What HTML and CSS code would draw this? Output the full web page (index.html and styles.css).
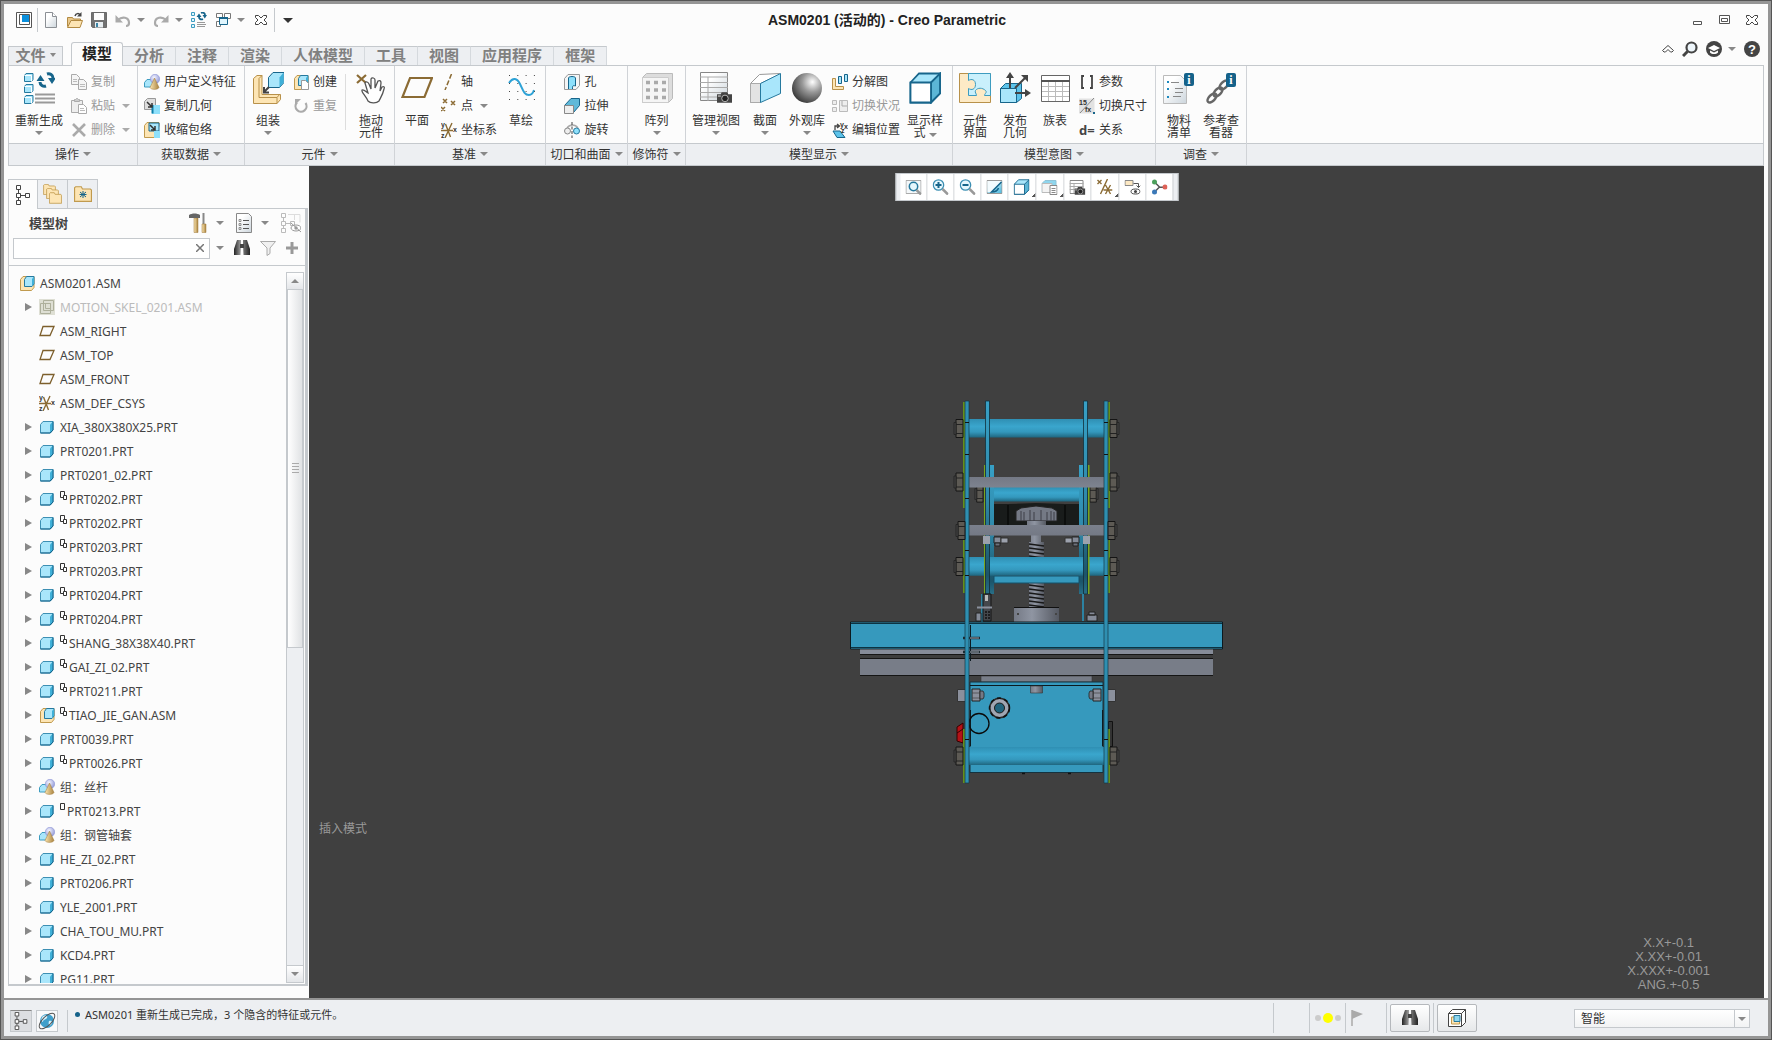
FILE: index.html
```html
<!DOCTYPE html>
<html lang="zh-CN">
  <head>
    <meta charset="UTF-8" />
    <meta name="viewport" content="width=device-width, initial-scale=1.0" />
    <title>ASM0201 (活动的) - Creo Parametric</title>
    <link rel="stylesheet" href="styles.css">
  </head>

  <body>
    <!-- icon sprite -->
    <svg class="sprite" width="0" height="0" aria-hidden="true">
      <defs>
        <linearGradient id="g-page" x1="0" y1="0" x2="1" y2="1"><stop offset="0.3" stop-color="#fff"/><stop offset="1" stop-color="#ccd5dc"/></linearGradient>
        <linearGradient id="g-dark" x1="0" x2="1"><stop offset="0" stop-color="#222"/><stop offset="0.4" stop-color="#999"/><stop offset="1" stop-color="#222"/></linearGradient>
        <linearGradient id="g-cone" x1="0" x2="1"><stop offset="0" stop-color="#fbe5b0"/><stop offset="1" stop-color="#a98340"/></linearGradient>
        <radialGradient id="g-ball" cx="0.68" cy="0.3" r="0.75"><stop offset="0" stop-color="#fff"/><stop offset="0.45" stop-color="#999"/><stop offset="1" stop-color="#3c3c3c"/></radialGradient>
        <radialGradient id="g-sph" cx="0.4" cy="0.35" r="0.7"><stop offset="0" stop-color="#f4f4ff"/><stop offset="1" stop-color="#8d96d6"/></radialGradient>
        <linearGradient id="g-blue" x1="0" y1="0" x2="1" y2="1"><stop offset="0" stop-color="#fff"/><stop offset="1" stop-color="#49b9df"/></linearGradient>
        <linearGradient id="g-bar" x1="0" y1="0" x2="0" y2="1"><stop offset="0" stop-color="#2f8fb3"/><stop offset="0.4" stop-color="#3aa6cd"/><stop offset="0.7" stop-color="#3498bd"/><stop offset="1" stop-color="#1f667f"/></linearGradient>
        <linearGradient id="g-rod" x1="0" y1="0" x2="0" y2="1"><stop offset="0" stop-color="#747985"/><stop offset="0.4" stop-color="#8a909d"/><stop offset="1" stop-color="#747985"/></linearGradient>
        <linearGradient id="g-steel" x1="0" x2="1"><stop offset="0" stop-color="#747985"/><stop offset="0.4" stop-color="#8f95a2"/><stop offset="1" stop-color="#555962"/></linearGradient>
        <linearGradient id="g-plate" x1="0" y1="0" x2="0" y2="1"><stop offset="0" stop-color="#37a0c6"/><stop offset="0.5" stop-color="#2f89aa"/><stop offset="0.9" stop-color="#1c5469"/><stop offset="1" stop-color="#286f88"/></linearGradient>
      </defs>

      <symbol id="i-win" viewBox="0 0 16 16"><path d="M.5.500h15v15H.5z" fill="#fff" stroke="#555"/><path d="M3.500 2.500h10v10h-10z" fill="#fff" stroke="#555"/><path d="M6 3h7v7H6z" fill="#0a8fdc"/></symbol>
      <symbol id="i-new" viewBox="0 0 16 16"><path d="M2.500.5h7l4 4v11h-11z" fill="url(#g-page)" stroke="#8b8f94"/><path d="M9.500.5v4h4" fill="#fff" stroke="#8b8f94"/></symbol>
      <symbol id="i-open" viewBox="0 0 16 16"><path d="M.5 14.500v-9h5l1 1.500h7v3" fill="#e9c88b" stroke="#b28a42"/><path d="M.5 15.500 4 8.500h11.500l-2.500 7z" fill="#fde5b4" stroke="#b28a42"/><path d="M8 4c1-3 4-3 5-1" fill="none" stroke="#444" stroke-width="1.500"/><path d="M14.500 0v4.500h-4.500z" fill="#444"/></symbol>
      <symbol id="i-save" viewBox="0 0 16 16"><path d="M.5.500h15v15h-14l-1-1z" fill="#727272" stroke="#6a6a6a"/><path d="M3 1h10v7H3z" fill="#fdfdfd"/><path d="M4 10h8v5.500H4z" fill="#e8eef1"/><path d="M5 11h2v4H5z" fill="#3b84a5"/></symbol>
      <symbol id="i-undo" viewBox="0 0 16 16"><path d="M3 8c4-4 11-3 11 3 0 2-1 3-3 3" fill="none" stroke="#aaa" stroke-width="2.200"/><path d="M.5 3v7.500H8z" fill="#aaa"/></symbol>
      <symbol id="i-regen" viewBox="0 0 32 32"><g fill="#a9e6fb" stroke="#26799e"><path d="M1.500 3.500 3 1.500h7v6l-1.500 2h-7zM1.500 14.500 3 12.500h7v6l-1.500 2h-7zM1.500 25.500 3 23.500h7v6l-1.500 2h-7z"/></g><path d="M1.500 3.500h7v6M1.500 14.500h7v6M1.500 25.500h7v6" fill="none" stroke="#fff"/><path d="M12 22.500h20M12 26.500h20M12 30.500h20" stroke="#999" stroke-width="2"/><path d="M17 10c0 3 3 5 6 4M30 6c0-3-3-5-6-4" fill="none" stroke="#17658b" stroke-width="3"/><path d="m13.500 9 4-6 4 6zM25 6h8l-4 6z" fill="#17658b"/></symbol>
      <symbol id="i-regen-small" viewBox="0 0 16 16"><path d="M.5.500h3v3h-3zM.5 6.500h3v3h-3zM.5 12.500h3v3h-3z" fill="#dff5fd" stroke="#3d9cc0"/><path d="M6 10.500h8M6 12.500h9M6 14.500h8" stroke="#999"/><path d="M8 5c0 2 2 3 4 2M14 3c0-2-2-3-4-2" fill="none" stroke="#17658b" stroke-width="1.800"/><path d="m5.500 5 2.500-3.500L10.500 5zM11.500 3H16l-2.200 3.500z" fill="#17658b"/></symbol>
      <symbol id="i-windows" viewBox="0 0 16 16"><path d="M1.500 1.500h6v4h-6zM9.500 1.500h6v5h-6zM1.500 9.500h4v5h-4z" fill="#fff" stroke="#777"/><path d="M4.500 5.500h8v7h-8z" fill="#dff5fd" stroke="#17658b"/><path d="M4 6h9" stroke="#17658b" stroke-width="2"/></symbol>
      <symbol id="i-xout" viewBox="0 0 12 10"><path d="M.5.500h3l2.500 2.500L8.500.500h3v2L9 5l2.500 2.500v2h-3L6 7 3.500 9.500h-3v-2L3 5 .5 2.500z" fill="#fff" stroke="#444"/></symbol>

      <symbol id="i-copy" viewBox="0 0 16 16"><g fill="#f5f5f5" stroke="#aaa"><path d="M.5.500h5l3 3v7h-8z"/><path d="M7.500 5.500h5l3 3v7h-8z"/></g><path d="M2 5.500h4M2 7.500h4M9 10.500h5M9 12.500h5" stroke="#bbb"/></symbol>
      <symbol id="i-paste" viewBox="0 0 16 16"><path d="M.5 2.500h11v12H.5z" fill="#eee" stroke="#aaa"/><path d="M3.500 3.500v-2h1l1-1h1l1 1h1v2z" fill="#ccc" stroke="#aaa"/><path d="M7.500 6.500h5l3 3v6h-8z" fill="#fff" stroke="#aaa"/><path d="M9 10.500h4M9 12.500h5" stroke="#bbb"/></symbol>
      <symbol id="i-delete" viewBox="0 0 16 16"><path d="m2 2 12 12M14 2 2 14" stroke="#aaa" stroke-width="2.600"/></symbol>
      <symbol id="i-udf" viewBox="0 0 16 16"><path d="M.5 8.500 3 5.500h7v5l-2 2.500H.5z" fill="#a9e6fb" stroke="#3d9cc0"/><circle cx="11" cy="5" r="4.700" fill="url(#g-sph)" stroke="#8d96d6" stroke-width=".6"/><path d="m10.500 4 4.500 9.500c-1 2.500-8 2.500-9 0z" fill="url(#g-cone)" stroke="#a07a38" stroke-width=".5"/></symbol>
      <symbol id="i-copygeom" viewBox="0 0 16 16"><path d="M.5 3.500 3.500.5h8v8l-3 3h-8z" fill="#ddd" stroke="#999"/><path d="M8 7h8v9H8z" fill="#8ee0fb"/><path d="M8.500 7v8.500" stroke="#0d7fa8" stroke-width="2"/><path d="m3 4 5 5M8 5v4H4" fill="none" stroke="#333" stroke-width="1.500"/></symbol>
      <symbol id="i-shrink" viewBox="0 0 16 16"><path d="M.5 3.500 3 .5h12v3l-3 12H.5z" fill="#fde5b4" stroke="#c09a4e"/><path d="M5 1h10v8H5z" fill="#a9e6fb" stroke="#17658b"/><path d="M10 9h6v7h-6z" fill="#8ee0fb"/><path d="m6 3 5 5M11 4v4H7" fill="none" stroke="#333" stroke-width="1.500"/></symbol>
      <symbol id="i-asm" viewBox="0 0 16 16"><path d="M1.500 4.500 4 1.500h11v11l-2.500 3h-11z" fill="#fde5b4" stroke="#c09a4e"/><path d="m5.500 4.500 2-3h7.500v7.500l-2 2.500H5.500z" fill="#a9e6fb" stroke="#26799e"/><path d="m13 11 2-2.500V1.500l-2 2.500z" fill="#3fb0d8"/></symbol>
      <symbol id="i-create" viewBox="0 0 16 16"><use href="#i-asm"/><path d="M8.500 6.500h4l3 3v6h-7z" fill="#fff" stroke="#999"/></symbol>
      <symbol id="i-repeat" viewBox="0 0 16 16"><path d="M4 4.500A5.500 5.500 0 1 0 12.500 5" fill="none" stroke="#aaa" stroke-width="2.200"/><path d="M8 1H2v6z" fill="#aaa"/></symbol>
      <symbol id="i-assemble" viewBox="0 0 32 32"><path d="M1.500 6.500 5 3.500h5v19h18.500v5l-3.500 4H1.500z" fill="#fde5b4" stroke="#b8914a"/><path d="M7 6.500v19h18l3-3.500M7 6.500l3-3M25 25.500v6" fill="none" stroke="#b8914a"/><path d="M16.500 5.500 21 .5h11v10l-4.500 5h-11z" fill="#a9e6fb" stroke="#17658b"/><path d="m27.500 5.500 4-5v10l-4 5z" fill="#3fb0d8"/><path d="m17 15-5 5M12 15v5.500h5" fill="none" stroke="#444" stroke-width="2"/></symbol>
      <symbol id="i-drag" viewBox="0 0 32 32"><path d="m2 3 9 8M11 3l-9 8" stroke="#8b6b34" stroke-width="2.200"/><path d="M13 31c-2-5-7-9-6-11 2-1 4 2 6 3l-3-10c1-2 3-1 4 1l2 5V9c1-2 4-1 4 1v8l3-7c2-1 3 0 3 2l-1 8 2-4c2-1 3 0 2 2-1 5-3 8-5 12-3 3-9 2-11 0z" fill="#fff" stroke="#555" stroke-width="1.300" transform="translate(0 -2)"/></symbol>
      <symbol id="i-plane" viewBox="0 0 32 32"><path d="M9 6h22l-7.500 19H1.500z" fill="none" stroke="#8b6b34" stroke-width="2.200"/></symbol>
      <symbol id="i-axis" viewBox="0 0 16 16"><path d="M10.500 0 4 16" stroke="#8b6b34" stroke-width="1.500" stroke-dasharray="5 2"/></symbol>
      <symbol id="i-point" viewBox="0 0 16 16"><path d="m2 1 4 4M6 1 2 5M10 3l4 4M14 3l-4 4M0 9l4 4M4 9l-4 4" stroke="#8b6b34" stroke-width="1.500"/></symbol>
      <symbol id="i-csys" viewBox="0 0 16 16"><path d="M0 8.500h12M4.500 2l5 13M11 1 4 16" stroke="#8b6b34" stroke-width="1.400" fill="none"/></symbol>
      <symbol id="i-sketch" viewBox="0 0 32 32"><path d="M4 11c4-6 8-5 11 1s4 11 9 11c2 0 4-2 5-5" fill="none" stroke="#2da2d6" stroke-width="2"/><g stroke="#444" stroke-dasharray="1 7.300"><path d="M4 3.500h27M4 11.500h27M4 19.500h27M4 27.500h27"/></g></symbol>
      <symbol id="i-hole" viewBox="0 0 16 16"><path d="M.5 4.500 4 .5h11.500v11l-3.500 4H.5z" fill="#f5f5f5" stroke="#999"/><path d="M4.500 15V4c0-2 7-2 7 0v8c-3-1-3 0-3 3" fill="#8ee0fb" stroke="#17658b"/></symbol>
      <symbol id="i-extrude" viewBox="0 0 16 16"><path d="M.5 7.500 7 .5h8.500v7l-6 7z" fill="#5fb9d9" stroke="#17658b"/><path d="M.5 7.500h9v8h-9z" fill="#eee" stroke="#888"/></symbol>
      <symbol id="i-revolve" viewBox="0 0 16 16"><path d="M3 6c3-4 8-4 11 0" fill="none" stroke="#aaa" stroke-width="1.500"/><circle cx="3.500" cy="9" r="3" fill="#eee" stroke="#888"/><circle cx="12.500" cy="9" r="3" fill="#8ee0fb" stroke="#26799e"/><path d="M8 0v16" stroke="#444" stroke-dasharray="3 1.500"/></symbol>
      <symbol id="i-pattern" viewBox="0 0 32 32"><path d="m1.500 5.500 4-4h26v25l-4 4h-26z" fill="#ddd" stroke="#bbb"/><path d="M1.500 5.500h26v25h-26z" fill="#f5f5f5" stroke="#ccc"/><path d="M5 10.500h20M5 18h20M5 25.500h20" stroke="#aaa" stroke-width="3.500" stroke-dasharray="4 4"/></symbol>
      <symbol id="i-camera" viewBox="0 0 16 12"><path d="M0 3h4l1-2h6l1 2h4v9H0z" fill="#444"/><circle cx="8.500" cy="7.500" r="3.500" fill="#222" stroke="#bbb"/><path d="M1 4h3v2H1z" fill="#999"/></symbol>
      <symbol id="i-viewmgr" viewBox="0 0 32 32"><path d="M.5.500h27v28H.5z" fill="url(#g-page)" stroke="#888"/><path d="M0 5h28M0 10.500h28M0 15.500h28M0 20.500h28M0 25h28M8 5v24" stroke="#aaa"/><use href="#i-camera" x="17" y="19" width="15" height="12"/></symbol>
      <symbol id="i-viewmgr-small" viewBox="0 0 16 16"><path d="M.5 1.500h13v13H.5z" fill="#fff" stroke="#888"/><path d="M0 4.500h14M0 7.500h14M0 10.500h14M4.500 4v10" stroke="#aaa"/><use href="#i-camera" x="5" y="7" width="11" height="9"/></symbol>
      <symbol id="i-section" viewBox="0 0 32 32"><path d="m1.500 11.500 9-9 20-1v1l-19 9v19h-10z" fill="#fff" stroke="#999"/><path d="M1.500 11.500h10v19h-10z" fill="#e3e3e3" stroke="#aaa"/><path d="m11.500 11.500 20-10v20l-20 9z" fill="#a9e6fb" stroke="#26799e"/></symbol>
      <symbol id="i-ball" viewBox="0 0 32 32"><circle cx="16" cy="16" r="15" fill="url(#g-ball)"/></symbol>
      <symbol id="i-explode" viewBox="0 0 16 16"><path d="M.5 4.500h3v8h8v3H.5z" fill="#fde5b4" stroke="#b8914a"/><path d="M6.500 2.500h3v7h-3zM12.500.500h3v7h-3z" fill="#a9e6fb" stroke="#17658b"/></symbol>
      <symbol id="i-switch" viewBox="0 0 16 16"><path d="M.5 2.500h4v4h-4zM.5 9.500h4v4h-4zM7.500 2.500h8v11h-8z" fill="#eee" stroke="#bbb"/><path d="M10 3v5h5" fill="none" stroke="#aaa"/></symbol>
      <symbol id="i-cube" viewBox="0 0 32 32"><path d="M1.500 10.500 10 1.500h21v20l-9 9h-20.500z" fill="#a9e6fb" stroke="#17658b" stroke-width="1.800"/><path d="m22 10.500 9-9v20l-9 9z" fill="#5cb6d6" stroke="#17658b" stroke-width="1.800"/><path d="M1.500 10.500H22v20H1.500z" fill="#fff" stroke="#17658b" stroke-width="1.800"/></symbol>
      <symbol id="i-interface" viewBox="0 0 32 32"><path d="M.5 1.500h31v29H.5z" fill="#fdeac6" stroke="#b8914a"/><path d="M9.500 1.500h22v22h-6c0-2 3-3 1-5-3-3-8-3-10 0-1 2 1 3 1 5h-8v-7c3 2 7 1 7-4s-4-6-7-4z" fill="#c9f0fc" stroke="#3d9cc0"/></symbol>
      <symbol id="i-publish" viewBox="0 0 32 32"><path d="m1.500 16.500 5-5h16v15l-5 4h-16z" fill="#5cc3ea" stroke="#17658b"/><path d="M1.500 16.500h16v14h-16z" fill="#a9e6fb" stroke="#17658b"/><path d="M11 16V4M16 16 26 6M16 21h13" stroke="#444" stroke-width="2"/><path d="m11 0 4 6H7zM29 3v7l-7-7zM32 21l-6 4v-8z" fill="#444"/></symbol>
      <symbol id="i-famtab" viewBox="0 0 32 32"><path d="M2.500 3.500h28v26h-28z" fill="#fff" stroke="#666"/><path d="M2 9h29" stroke="#555" stroke-width="2"/><path d="M3 14.500h27M3 19.500h27M3 24.500h27M9.500 10v19M16.500 10v19M23.500 10v19" stroke="#bbb"/></symbol>
      <symbol id="i-param" viewBox="0 0 16 16"><path d="M5 2H3v12h2M11 2h2v12h-2" fill="none" stroke="#444" stroke-width="1.800"/></symbol>

      <symbol id="i-refit" viewBox="0 0 16 16"><path d="M.5 1.500h15v13H.5z" fill="#f4f8fa" stroke="#aaa"/><circle cx="8" cy="7.500" r="4.200" fill="#e6f7fd" stroke="#26799e" stroke-width="1.500"/><path d="m11 11 4.500 4.500" stroke="#999" stroke-width="2.500"/></symbol>
      <symbol id="i-lens" viewBox="0 0 16 16"><circle cx="6" cy="6" r="5.200" fill="#e6f7fd" stroke="#3d8fb3" stroke-width="1.300"/><path d="m10 10 5.500 5.500" stroke="#999" stroke-width="2.500"/></symbol>
      <symbol id="i-zoomin" viewBox="0 0 16 16"><use href="#i-lens"/><path d="M3 6h6M6 3v6" stroke="#17658b" stroke-width="2"/></symbol>
      <symbol id="i-zoomout" viewBox="0 0 16 16"><use href="#i-lens"/><path d="M3 6h6" stroke="#17658b" stroke-width="2"/></symbol>
      <symbol id="i-repaint" viewBox="0 0 16 16"><path d="M.5 1.500h15v13H.5z" fill="url(#g-blue)" stroke="#999"/><path d="M1 2h14L5 13H1z" fill="#f4fbfe"/><path d="M15 3 5 13c3 0 6-1 7-4" fill="none" stroke="#17658b" stroke-width="1.500"/></symbol>
      <symbol id="i-saved" viewBox="0 0 16 16"><path d="m.5 4.500 3-3h11v8l-3 4H.5z" fill="#8ed6ee" stroke="#8fc4d8"/><path d="M.5 4.500h10v9H.5z" fill="#f4f4f4" stroke="#bbb"/><path d="M8.500 6.500h7v9h-7z" fill="#fff" stroke="#888"/><path d="M10 9.500h4M10 11.500h4M10 13.500h4" stroke="#888"/></symbol>
      <symbol id="i-datums" viewBox="0 0 16 16"><path d="m1 1 4 4M5 1 1 5M11 0 4 15M7 11h9M9 6l5 9M14 6l-5 9" stroke="#8b6b34" stroke-width="1.400" fill="none"/></symbol>
      <symbol id="i-annot" viewBox="0 0 16 16"><path d="M.5 1.500h8v5h-8z" fill="#fde9c4" stroke="#888"/><path d="M9 4.500h5v4M12 6.500l2 2 2-2" fill="none" stroke="#555"/><ellipse cx="11" cy="12.500" rx="4.500" ry="2.500" fill="#fff" stroke="#444"/><circle cx="11" cy="12.500" r="1.500" fill="#444"/></symbol>
      <symbol id="i-spin" viewBox="0 0 16 16"><path d="m3 3 5 5 6 .5M8 8l-5 5" fill="none" stroke="#555" stroke-width="1.500"/><circle cx="3" cy="3" r="2.500" fill="#4ca05c"/><circle cx="13.500" cy="8" r="2.500" fill="#dd6258"/><circle cx="3" cy="13" r="2.500" fill="#3b79b8"/></symbol>

      <symbol id="i-tree" viewBox="0 0 14 20"><path d="M2.500 5v10M5 10.500h4" stroke="#444"/><path d="M.5.500h4v4h-4zM.5 8.500h4v4h-4zM.5 15.500h4v4h-4zM9.500 8.500h4v4h-4z" fill="#fff" stroke="#444"/></symbol>
      <symbol id="i-folder" viewBox="0 0 16 14"><path d="M.5 13.500v-12l1-1h5l1 2h7l1 1v10z" fill="#fde5b4" stroke="#c09a4e"/></symbol>
      <symbol id="i-folders" viewBox="0 0 20 20"><use href="#i-folder" x="0" y="0" width="13" height="11"/><use href="#i-folder" x="3" y="4" width="13" height="11"/><use href="#i-folder" x="6" y="8" width="13" height="12"/></symbol>
      <symbol id="i-fav" viewBox="0 0 18 18"><use href="#i-folder" x="0" y="1" width="18" height="16"/><path d="M9 6v7M6 7l6 5M12 7l-6 5M5.500 9.500h7" stroke="#17658b"/></symbol>
      <symbol id="i-tools" viewBox="0 0 18 20"><path d="M5 5h4v14.500H5z" fill="url(#g-cone)" stroke="#a07a38" stroke-width=".5"/><path d="M0 5V2c3-2 8-2 11 0v3H3z" fill="#666"/><path d="M14.500 0v12" stroke="#888" stroke-width="2"/><path d="M13 11h4v8.500h-4z" fill="url(#g-cone)" stroke="#a07a38" stroke-width=".5"/></symbol>
      <symbol id="i-doc" viewBox="0 0 16 20"><path d="M.5.500h12l3 3v16H.5z" fill="url(#g-page)" stroke="#888"/><path d="M7 7.500h6M7 11.500h6M7 15.500h6" stroke="#555"/><path d="M3 6.500h2v2H3zM3 10.500h2v2H3zM3 14.500h2v2H3z" fill="none" stroke="#777" stroke-width=".8"/></symbol>
      <symbol id="i-treeoff" viewBox="0 0 20 20"><use href="#i-tree" width="14" height="20" opacity=".35"/><path d="M7 1.500h12v8M13.500 2v5" fill="none" stroke="#ddd"/><ellipse cx="15" cy="15" rx="5" ry="3" fill="#fff" stroke="#999"/><circle cx="15" cy="15" r="1.700" fill="#999"/><path d="m10 10 10 9" stroke="#999"/></symbol>
      <symbol id="i-binoc" viewBox="0 0 16 16"><path d="M3 0h4v5l-.5 10H0V9zM13 0H9v5l.5 10H16V9z" fill="url(#g-dark)"/><path d="M6 4h4v4H6z" fill="#444"/></symbol>
      <symbol id="i-filter" viewBox="0 0 16 16"><path d="M.5 1.500h15L10 8v5.500L7 15.500V8z" fill="#f0f0f0" stroke="#aaa"/></symbol>
      <symbol id="i-plus" viewBox="0 0 12 12"><path d="M6 0v12M0 6h12" stroke="#999" stroke-width="3"/></symbol>
      <symbol id="i-part" viewBox="0 0 16 16"><path d="m1.500 5.500 2.500-3h10v8.500l-2.500 3h-10z" fill="#a9e6fb" stroke="#3d8fb3"/><path d="M11 5.500 14 2.500v8.500l-3 3z" fill="#3fb0d8"/><path d="M1.500 14h9.500l3-3V2.500" fill="none" stroke="#17658b"/></symbol>
      <symbol id="i-skel" viewBox="0 0 16 16"><path d="M0 0h16v16H0z" fill="#dedfd4"/><path d="M1.500 4.500h10v10h-10zM4.500 1.500h10v10h-10zM6.500 4.500h5v5h-5z" fill="none" stroke="#aeb09c"/></symbol>
      <symbol id="i-tplane" viewBox="0 0 16 16"><path d="M4 3.500h11l-4 9H1z" fill="none" stroke="#7d5f2c" stroke-width="1.300"/></symbol>
      <symbol id="i-pair" viewBox="0 0 8 10"><path d="M.5.500h4v6h-4z" fill="none" stroke="#333"/><path d="M3.500 4.500h3v4h-3z" fill="#fff" stroke="#333"/></symbol>
      <symbol id="i-single" viewBox="0 0 6 10"><path d="M.5.500h4v6h-4z" fill="none" stroke="#333"/></symbol>
      <symbol id="i-globe" viewBox="0 0 18 18"><circle cx="9" cy="9" r="7" fill="#3f9fcb"/><path d="M5 4c3-2 5 0 4 2s-4 1-4 4c-2-1-2-4 0-6zM11 9c3-1 4 1 2 4-2 1-3-1-2-4z" fill="#d5f1fb"/><ellipse cx="9" cy="9" rx="10" ry="4.500" fill="none" stroke="#555" transform="rotate(-45 9 9)"/></symbol>
      <symbol id="i-boxsel" viewBox="0 0 18 18"><path d="m.5 4.500 4-4h13v13l-4 4H.5zM.5 4.500h13v13M13.500 4.500l4-4" fill="#fff" stroke="#444"/><path d="M3.500 8h8v7h-8z" fill="#fde5b4" stroke="#c09a4e"/><path d="M6 6.500h6v6H6z" fill="#8ed6ee" stroke="#26799e"/></symbol>
    </svg>

    <div class="window">
      <header class="titlebar">
        <div class="qat">
          <button aria-label="窗口"><svg class="s16"><use href="#i-win"/></svg></button>
          <span class="sep"></span>
          <button aria-label="新建"><svg class="s16"><use href="#i-new"/></svg></button>
          <button aria-label="打开"><svg class="s16"><use href="#i-open"/></svg></button>
          <button aria-label="保存"><svg class="s16"><use href="#i-save"/></svg></button>
          <button aria-label="撤销"><svg class="s16"><use href="#i-undo"/></svg><i class="caret"></i></button>
          <button aria-label="重做"><svg class="s16 flip"><use href="#i-undo"/></svg><i class="caret"></i></button>
          <button aria-label="重新生成"><svg class="s16"><use href="#i-regen-small"/></svg></button>
          <button aria-label="窗口列表"><svg class="s16"><use href="#i-windows"/></svg><i class="caret"></i></button>
          <button class="close-win" aria-label="关闭窗口"><svg class="s12"><use href="#i-xout"/></svg></button>
          <span class="sep"></span>
          <button aria-label="自定义"><i class="caret custom"></i></button>
        </div>
        <h1>ASM0201 (活动的) - Creo Parametric</h1>
        <div class="win-controls">
          <button aria-label="最小化"><svg class="s12" viewBox="0 0 12 10"><path d="M1.500 6.500h8v3h-8z" fill="#fff" stroke="#555"/></svg></button>
          <button aria-label="最大化"><svg class="s12" viewBox="0 0 12 10"><path d="M.5.500h10v8H.5zM2.500 3.500h6v3h-6z" fill="#fff" stroke="#555"/></svg></button>
          <button aria-label="关闭"><svg class="s12"><use href="#i-xout"/></svg></button>
        </div>
      </header>

      <nav class="tabrow">
        <button class="file-tab">文件<i class="caret"></i></button>
        <div class="tabs">
          <button class="active">模型</button>
          <button>分析</button>
          <button>注释</button>
          <button>渲染</button>
          <button>人体模型</button>
          <button>工具</button>
          <button>视图</button>
          <button>应用程序</button>
          <button>框架</button>
        </div>
        <div class="help-tools">
          <button aria-label="最小化功能区"><svg class="s12" viewBox="0 0 12 10"><path d="M.5 6.500 6 1.500l5.500 5-1.500 1.500H8.500L6 5.500 3.500 8H2z" fill="#fff" stroke="#444"/></svg></button>
          <button aria-label="搜索"><svg class="s16" viewBox="0 0 16 16"><circle cx="9.500" cy="6.500" r="5" fill="#eef6fb" stroke="#444" stroke-width="2.200"/><path d="m5.500 10.500-4.500 4.500" stroke="#444" stroke-width="3"/></svg></button>
          <button aria-label="学习"><svg class="s16" viewBox="0 0 16 16"><circle cx="8" cy="8" r="8" fill="#444"/><path d="m2 7 6-3 6 3-6 3zM4 9.500v2c2 2 6 2 8 0v-2l-4 2z" fill="#fff"/></svg><i class="caret"></i></button>
          <button aria-label="帮助"><svg class="s16" viewBox="0 0 16 16"><circle cx="8" cy="8" r="8" fill="#444"/><text x="8" y="13" text-anchor="middle" font-family="Liberation Sans" font-size="13" font-weight="bold" fill="#fff">?</text></svg></button>
        </div>
      </nav>

      <section class="ribbon">
        <div class="group g-ops">
          <div class="tools">
            <button class="big wide"><svg class="s32"><use href="#i-regen"/></svg><span>重新生成</span><i class="caret"></i></button>
            <div class="stack">
              <button disabled><svg class="s16"><use href="#i-copy"/></svg>复制</button>
              <button disabled><svg class="s16"><use href="#i-paste"/></svg>粘贴<i class="caret"></i></button>
              <button disabled><svg class="s16"><use href="#i-delete"/></svg>删除<i class="caret"></i></button>
            </div>
          </div>
          <button class="caption">操作<i class="caret"></i></button>
        </div>
        <div class="group g-data">
          <div class="tools">
            <div class="stack">
              <button><svg class="s16"><use href="#i-udf"/></svg>用户定义特征</button>
              <button><svg class="s16"><use href="#i-copygeom"/></svg>复制几何</button>
              <button><svg class="s16"><use href="#i-shrink"/></svg>收缩包络</button>
            </div>
          </div>
          <button class="caption">获取数据<i class="caret"></i></button>
        </div>
        <div class="group g-comp">
          <div class="tools">
            <button class="big"><svg class="s32"><use href="#i-assemble"/></svg><span>组装</span><i class="caret"></i></button>
            <div class="stack">
              <button><svg class="s16"><use href="#i-create"/></svg>创建</button>
              <button disabled><svg class="s16"><use href="#i-repeat"/></svg>重复</button>
            </div>
            <span class="divider"></span>
            <button class="big"><svg class="s32"><use href="#i-drag"/></svg><span>拖动<br>元件</span></button>
          </div>
          <button class="caption">元件<i class="caret"></i></button>
        </div>
        <div class="group g-datum">
          <div class="tools">
            <button class="big"><svg class="s32"><use href="#i-plane"/></svg><span>平面</span></button>
            <div class="stack">
              <button><svg class="s16"><use href="#i-axis"/></svg>轴</button>
              <button><svg class="s16"><use href="#i-point"/></svg>点<i class="caret"></i></button>
              <button><svg class="s16 letters" viewBox="0 0 16 16"><use href="#i-csys"/><text x="0" y="5">y</text><text x="12" y="10">x</text><text x="0" y="16">z</text></svg>坐标系</button>
            </div>
            <button class="big"><svg class="s32"><use href="#i-sketch"/></svg><span>草绘</span></button>
          </div>
          <button class="caption">基准<i class="caret"></i></button>
        </div>
        <div class="group g-cut">
          <div class="tools centered">
            <div class="stack">
              <button><svg class="s16"><use href="#i-hole"/></svg>孔</button>
              <button><svg class="s16"><use href="#i-extrude"/></svg>拉伸</button>
              <button><svg class="s16"><use href="#i-revolve"/></svg>旋转</button>
            </div>
          </div>
          <button class="caption">切口和曲面<i class="caret"></i></button>
        </div>
        <div class="group g-mod">
          <div class="tools centered">
            <button class="big"><svg class="s32"><use href="#i-pattern"/></svg><span>阵列</span><i class="caret"></i></button>
          </div>
          <button class="caption">修饰符<i class="caret"></i></button>
        </div>
        <div class="group g-view">
          <div class="tools">
            <button class="big wide"><svg class="s32"><use href="#i-viewmgr"/></svg><span>管理视图</span><i class="caret"></i></button>
            <button class="big"><svg class="s32"><use href="#i-section"/></svg><span>截面</span><i class="caret"></i></button>
            <button class="big"><svg class="s32"><use href="#i-ball"/></svg><span>外观库</span><i class="caret"></i></button>
            <div class="stack">
              <button><svg class="s16"><use href="#i-explode"/></svg>分解图</button>
              <button disabled><svg class="s16"><use href="#i-switch"/></svg>切换状况</button>
              <button><svg class="s16 letters" viewBox="0 0 16 16"><path d="M1 9h7l5 6.500H5z" fill="#5cc3ea" stroke="#17658b"/><path d="M3 8V4h4M5 2l2.500 2L5 6" fill="none" stroke="#444" stroke-width="1.300"/><text x="8" y="5">y</text><text x="12" y="7">x</text><text x="9" y="11">z</text></svg>编辑位置</button>
            </div>
            <button class="big"><svg class="s32"><use href="#i-cube"/></svg><span>显示样<br>式 <i class="caret"></i></span></button>
          </div>
          <button class="caption">模型显示<i class="caret"></i></button>
        </div>
        <div class="group g-intent">
          <div class="tools">
            <button class="big"><svg class="s32"><use href="#i-interface"/></svg><span>元件<br>界面</span></button>
            <button class="big"><svg class="s32"><use href="#i-publish"/></svg><span>发布<br>几何</span></button>
            <button class="big"><svg class="s32"><use href="#i-famtab"/></svg><span>族表</span></button>
            <div class="stack">
              <button><svg class="s16"><use href="#i-param"/></svg>参数</button>
              <button><svg class="s16 letters" viewBox="0 0 16 16"><path d="M0 .5h15.500v15H0" fill="#e2e2e2"/><path d="M15 0 1 15" stroke="#888"/><path d="M14 14h2v2h-2z" fill="#17658b"/><text x="0" y="7">15</text><text x="6" y="14" font-style="italic">fx</text></svg>切换尺寸</button>
              <button><svg class="s16" viewBox="0 0 16 16"><text x="0" y="13" font-size="13" font-weight="bold" fill="#444">d=</text></svg>关系</button>
            </div>
          </div>
          <button class="caption">模型意图<i class="caret"></i></button>
        </div>
        <div class="group g-inv">
          <div class="tools">
            <button class="big"><svg class="s32 info" viewBox="0 0 32 32"><path d="M.5 3.500h17l6 6v22H.5z" fill="url(#g-page)" stroke="#bbb"/><path d="M4 9h2v2H4zM4 16h2v2H4zM4 24h2v2H4z" fill="#1e8abf"/><path d="M8 10.500h8M12 16.500h8M12 20.500h8M10 24.500h8" stroke="#888"/><rect x="21" y="1" width="10" height="13" rx="2" fill="#15628a"/><text x="26" y="12">i</text></svg><span>物料<br>清单</span></button>
            <button class="big"><svg class="s32 info" viewBox="0 0 32 32"><g fill="none" stroke="#666" stroke-width="2.500"><ellipse cx="7" cy="26" rx="3" ry="5.500" transform="rotate(45 7 26)"/><ellipse cx="13" cy="20" rx="3" ry="5.500" transform="rotate(45 13 20)"/><ellipse cx="19" cy="13" rx="3" ry="5.500" transform="rotate(45 19 13)"/></g><rect x="21" y="1" width="10" height="14" rx="2" fill="#15628a"/><text x="26" y="12">i</text></svg><span>参考查<br>看器</span></button>
          </div>
          <button class="caption">调查<i class="caret"></i></button>
        </div>
        <div class="group rest">
          <div class="tools"></div>
          <div class="caption"></div>
        </div>
      </section>

      <main class="work">
        <aside class="side">
          <div class="side-tabs">
            <button class="active" aria-label="模型树"><svg width="14" height="20"><use href="#i-tree"/></svg></button>
            <button aria-label="文件夹"><svg width="20" height="20"><use href="#i-folders"/></svg></button>
            <button aria-label="收藏夹"><svg width="18" height="18"><use href="#i-fav"/></svg></button>
          </div>
          <div class="side-panel">
            <div class="side-head">
              <h2>模型树</h2>
              <button aria-label="设置"><svg width="18" height="20"><use href="#i-tools"/></svg><i class="caret"></i></button>
              <button aria-label="显示"><svg width="16" height="20"><use href="#i-doc"/></svg><i class="caret"></i></button>
              <button aria-label="隐藏"><svg width="20" height="20"><use href="#i-treeoff"/></svg></button>
            </div>
            <div class="side-search">
              <div class="search-box">
                <input type="text" aria-label="搜索模型树">
                <button aria-label="清除"><svg width="8" height="8" viewBox="0 0 8 8"><path d="m0 0 8 8M8 0 0 8" stroke="#777" stroke-width="1.500"/></svg></button>
              </div>
              <i class="caret"></i>
              <button aria-label="查找"><svg class="s16"><use href="#i-binoc"/></svg></button>
              <button aria-label="过滤"><svg class="s16"><use href="#i-filter"/></svg></button>
              <button aria-label="添加"><svg width="12" height="12"><use href="#i-plus"/></svg></button>
            </div>
            <div class="tree-area">
              <ul class="tree">
                <li class="root"><svg class="s16"><use href="#i-asm"/></svg>ASM0201.ASM</li>
                <li class="muted"><i class="exp"></i><svg class="s16"><use href="#i-skel"/></svg>MOTION_SKEL_0201.ASM</li>
                <li class="leaf"><svg class="s16"><use href="#i-tplane"/></svg>ASM_RIGHT</li>
                <li class="leaf"><svg class="s16"><use href="#i-tplane"/></svg>ASM_TOP</li>
                <li class="leaf"><svg class="s16"><use href="#i-tplane"/></svg>ASM_FRONT</li>
                <li class="leaf"><svg class="s16 letters" viewBox="0 0 16 16"><use href="#i-csys"/><text x="0" y="5">y</text><text x="12" y="10">x</text><text x="0" y="16">z</text></svg>ASM_DEF_CSYS</li>
                <li><i class="exp"></i><svg class="s16"><use href="#i-part"/></svg>XIA_380X380X25.PRT</li>
                <li><i class="exp"></i><svg class="s16"><use href="#i-part"/></svg>PRT0201.PRT</li>
                <li><i class="exp"></i><svg class="s16"><use href="#i-part"/></svg>PRT0201_02.PRT</li>
                <li><i class="exp"></i><svg class="s16"><use href="#i-part"/></svg><svg class="badge"><use href="#i-pair"/></svg>PRT0202.PRT</li>
                <li><i class="exp"></i><svg class="s16"><use href="#i-part"/></svg><svg class="badge"><use href="#i-pair"/></svg>PRT0202.PRT</li>
                <li><i class="exp"></i><svg class="s16"><use href="#i-part"/></svg><svg class="badge"><use href="#i-pair"/></svg>PRT0203.PRT</li>
                <li><i class="exp"></i><svg class="s16"><use href="#i-part"/></svg><svg class="badge"><use href="#i-pair"/></svg>PRT0203.PRT</li>
                <li><i class="exp"></i><svg class="s16"><use href="#i-part"/></svg><svg class="badge"><use href="#i-pair"/></svg>PRT0204.PRT</li>
                <li><i class="exp"></i><svg class="s16"><use href="#i-part"/></svg><svg class="badge"><use href="#i-pair"/></svg>PRT0204.PRT</li>
                <li><i class="exp"></i><svg class="s16"><use href="#i-part"/></svg><svg class="badge"><use href="#i-pair"/></svg>SHANG_38X38X40.PRT</li>
                <li><i class="exp"></i><svg class="s16"><use href="#i-part"/></svg><svg class="badge"><use href="#i-pair"/></svg>GAI_ZI_02.PRT</li>
                <li><i class="exp"></i><svg class="s16"><use href="#i-part"/></svg><svg class="badge"><use href="#i-pair"/></svg>PRT0211.PRT</li>
                <li><i class="exp"></i><svg class="s16"><use href="#i-asm"/></svg><svg class="badge"><use href="#i-pair"/></svg>TIAO_JIE_GAN.ASM</li>
                <li><i class="exp"></i><svg class="s16"><use href="#i-part"/></svg>PRT0039.PRT</li>
                <li><i class="exp"></i><svg class="s16"><use href="#i-part"/></svg><svg class="badge"><use href="#i-pair"/></svg>PRT0026.PRT</li>
                <li><i class="exp"></i><svg class="s16"><use href="#i-udf"/></svg>组：丝杆</li>
                <li><i class="exp"></i><svg class="s16"><use href="#i-part"/></svg><svg class="badge single"><use href="#i-single"/></svg>PRT0213.PRT</li>
                <li><i class="exp"></i><svg class="s16"><use href="#i-udf"/></svg>组：钢管轴套</li>
                <li><i class="exp"></i><svg class="s16"><use href="#i-part"/></svg>HE_ZI_02.PRT</li>
                <li><i class="exp"></i><svg class="s16"><use href="#i-part"/></svg>PRT0206.PRT</li>
                <li><i class="exp"></i><svg class="s16"><use href="#i-part"/></svg>YLE_2001.PRT</li>
                <li><i class="exp"></i><svg class="s16"><use href="#i-part"/></svg>CHA_TOU_MU.PRT</li>
                <li><i class="exp"></i><svg class="s16"><use href="#i-part"/></svg>KCD4.PRT</li>
                <li><i class="exp"></i><svg class="s16"><use href="#i-part"/></svg>PG11.PRT</li>
              </ul>
              <div class="scrollbar">
                <button aria-label="向上"><i class="caret up"></i></button>
                <div class="track"><div class="thumb"><i></i><i></i><i></i><i></i></div></div>
                <button aria-label="向下"><i class="caret"></i></button>
              </div>
            </div>
          </div>
        </aside>

        <div class="canvas">
          <div class="stage">
            <svg class="model" viewBox="836 382 401 420" width="401" height="420">
              <defs>
                <g id="nut"><path d="M-7-9h7V9h-7z" fill="#5d5a54" stroke="#151515"/><path d="M-7-4h7M-7 5h7" stroke="#222"/><path d="M-9-6h2V6h-2z" fill="#444" stroke="#222" stroke-width=".8"/></g>
                <g id="bolt"><path d="M-8-6h8V6h-8z" fill="#8b909c" stroke="#222"/><path d="M-8-2h8M-8 3h8" stroke="#444" stroke-width=".7"/><path d="M0-4h3l1 2v4l-1 2H0z" fill="#747985" stroke="#222" stroke-width=".8"/></g>
                <g id="thread"><path d="M0 0h15v24H0z" fill="url(#g-steel)"/><path d="m0 2 15 2M0 6l15 2M0 10l15 2M0 14l15 2M0 18l15 2M0 22l15 2" stroke="#181818" stroke-width="1.300"/></g>
              </defs>
              <!-- rear frame -->
              <path d="M990 465h4v129h-4zM1079 465h4v129h-4z" fill="url(#g-plate)"/>
              <path d="M969 419h135v18.500H969z" fill="url(#g-bar)"/>
              <path d="M994 487h85v14.500h-85z" fill="url(#g-bar)"/>
              <use href="#nut" transform="translate(983 494) scale(.9)"/>
              <use href="#nut" transform="translate(1090 494) scale(-.9 .9)"/>
              <!-- hand wheel -->
              <path d="M994 504h14l28-1 29 1h14v21h-85z" fill="#191c1b"/>
              <path d="M1008 505v20M1065 505v20" stroke="#000"/>
              <path d="M1016 511l5-3 15-2 16 2 5 3v10h-41z" fill="#747985" stroke="#222"/>
              <path d="M1021 511v10M1024 512v9M1030 510v11M1034 512v9M1041 510v11M1047 512v9M1051 511v10M1054 512v9" stroke="#3c3f46"/>
              <path d="M1027 521h19v4h-19zM1031 535h10v8h-10z" fill="url(#g-steel)"/>
              <g transform="translate(1029 542)"><use href="#thread"/></g>
              <g transform="translate(1029 583)"><use href="#thread"/></g>
              <!-- main bars -->
              <path d="M994 576h85v7h-85z" fill="#3699bd" stroke="#145069"/>
              <path d="M969 557h135v18.700H969z" fill="url(#g-bar)"/>
              <path d="M984 465h1.500v129H984zM1088 465h1.500v129H1088z" fill="#7aa61e"/>
              <path d="M985.500 401h4v193h-4zM1083.500 401h4v193h-4z" fill="url(#g-plate)" stroke="#10303c" stroke-width=".8"/>
              <path d="M994 537h7v6h-7zM1072 537h7v6h-7z" fill="#858b98" stroke="#222"/>
              <path d="M1001 538h7v5h-7zM1065 538h7v5h-7z" fill="#9da2ad" stroke="#333"/>
              <path d="M995 543h5v3h-5zM1073 543h5v3h-5z" fill="#6d717b" stroke="#222"/>
              <path d="M983 536h7v8h-7zM1083 536h7v8h-7z" fill="#9da2ad"/>
              <path d="M969 477h135v10.500H969zM969 525h135v10.500H969z" fill="url(#g-rod)"/>
              <!-- press head -->
              <path d="M1014 607.500h45V622h-45z" fill="url(#g-steel)"/>
              <path d="M1014 607.500h45" stroke="#111"/>
              <path d="M1017 613h2v2h-2zM1055 613h2v2h-2z" fill="#444"/>
              <path d="M1082 594h2v27h-2zM981 594h2v30h-2z" fill="#2c82a2"/>
              <path d="M983 594h8v27h-8z" fill="#44474c" stroke="#151515"/>
              <path d="M985 595h3v6h-3z" fill="#bbb"/>
              <path d="M977 607.500h15" stroke="#8b909c" stroke-width="2"/>
              <path d="M985 612h6M985 615h6M985 618h6" stroke="#111" stroke-width="1.500" stroke-dasharray="2 1"/>
              <path d="M976 613h5v8h-5zM1087 615h10v6h-10zM1089 612h6v3h-6z" fill="#858b98" stroke="#222"/>
              <path d="M850.500 622h372v27h-372z" fill="#3699bd" stroke="#0c1a20"/>
              <path d="M851 623.500h371M851 647.500h371" stroke="#0c3342"/>
              <path d="M860 649.500h353v5H860z" fill="#858b98"/>
              <path d="M860 654.500h353v4H860z" fill="#3c3c3c"/>
              <path d="M860 658.500h353v17H860z" fill="#787d88"/>
              <path d="M860 654.500h353M860 658.500h353M860 675.500h353" stroke="#151515"/>
              <path d="M981 676h111v6H981z" fill="#787d88" stroke="#333" stroke-width=".6"/>
              <path d="M970.500 625v36" stroke="#0c1a20"/>
              <path d="M963 638h17M963 652h17" stroke="#1c2a30" stroke-width="2.500"/>
              <path d="M970 638h9M970 652h9" stroke="#9da2ad"/>
              <!-- base box -->
              <path d="M970 682h133v90.500H970z" fill="#3699bd" stroke="#15323e"/>
              <path d="M970 685.500h133M970.500 710v36M1102.500 710v36" stroke="#0c1a20" fill="none"/>
              <path d="M1030.500 686h12v7h-12z" fill="url(#g-steel)" stroke="#333" stroke-width=".6"/>
              <circle cx="999.500" cy="708" r="10.500" fill="#2a2a2a"/>
              <circle cx="999.500" cy="708" r="9.500" fill="none" stroke="#111" stroke-width="2.500" stroke-dasharray="4 3"/>
              <circle cx="999.500" cy="708" r="7" fill="none" stroke="#a0a5b2" stroke-width="4"/>
              <circle cx="999.500" cy="708" r="5" fill="#20637d" stroke="#222"/>
              <circle cx="979" cy="723.500" r="10" fill="none" stroke="#0a0a0a" stroke-width="1.300"/>
              <path d="M969 747h135v18H969z" fill="url(#g-bar)"/>
              <path d="M1022 773.500h3M1068 773.500h3" stroke="#111" stroke-width="1.500"/>
              <use href="#bolt" x="980" y="695"/>
              <use href="#bolt" transform="translate(1093 695) scale(-1 1)"/>
              <path d="M957.500 689.500h8v12h-8zM1107.500 689.500h8v12h-8z" fill="#8b909c" stroke="#333"/>
              <path d="m963 723-6 4v14l6 2z" fill="#b31217" stroke="#300"/>
              <path d="M957 733l6-4" stroke="#300"/>
              <path d="M1108.500 721.500h4v25h-4z" fill="#333" stroke="#111"/>
              <!-- front side plates -->
              <path d="M963 402h2v106h-2zM963 540h2v53h-2zM963 729h2v54h-2zM1108 402h2v106h-2zM1108 540h2v53h-2zM1108 729h2v54h-2z" fill="#64901d"/>
              <path d="M965 401h4v382h-4zM1104 401h4v382h-4z" fill="#2f8fb1" stroke="#143845" stroke-width=".7"/>
              <path d="M965 422.500h4M965 454.500h4M965 498.500h4M965 550.500h4M965 575.500h4M965 739.500h4M1104 422.500h4M1104 454.500h4M1104 498.500h4M1104 550.500h4M1104 575.500h4M1104 739.500h4" stroke="#111"/>
              <use href="#nut" x="963" y="428.500"/><use href="#nut" x="963" y="482"/><use href="#nut" x="965" y="530.500"/><use href="#nut" x="963" y="566.500"/><use href="#nut" x="963" y="756"/>
              <g transform="translate(2073 0) scale(-1 1)"><use href="#nut" x="963" y="428.500"/><use href="#nut" x="963" y="482"/><use href="#nut" x="965" y="530.500"/><use href="#nut" x="963" y="566.500"/><use href="#nut" x="963" y="756"/></g>
            </svg>
          </div>
          <div class="view-bar">
            <button aria-label="重新调整"><svg class="s16"><use href="#i-refit"/></svg></button>
            <button aria-label="放大"><svg class="s16"><use href="#i-zoomin"/></svg></button>
            <button aria-label="缩小"><svg class="s16"><use href="#i-zoomout"/></svg></button>
            <button aria-label="重画"><svg class="s16"><use href="#i-repaint"/></svg></button>
            <button class="more" aria-label="显示样式"><svg class="s16"><use href="#i-cube"/></svg></button>
            <button class="more" aria-label="已保存方向"><svg class="s16"><use href="#i-saved"/></svg></button>
            <button aria-label="视图管理器"><svg class="s16"><use href="#i-viewmgr-small"/></svg></button>
            <button class="more" aria-label="基准显示"><svg class="s16"><use href="#i-datums"/></svg></button>
            <button aria-label="注释显示"><svg class="s16"><use href="#i-annot"/></svg></button>
            <button aria-label="旋转中心"><svg class="s16"><use href="#i-spin"/></svg></button>
          </div>
          <p class="mode">插入模式</p>
          <p class="tolerance">X.X+-0.1<br>X.XX+-0.01<br>X.XXX+-0.001<br>ANG.+-0.5</p>
        </div>
      </main>

      <footer class="status">
        <button class="toggle on" aria-label="导航器"><svg width="14" height="18"><use href="#i-tree"/></svg></button>
        <button class="toggle" aria-label="浏览器"><svg width="18" height="18"><use href="#i-globe"/></svg></button>
        <span class="sep"></span>
        <p class="message">ASM0201 重新生成已完成，3 个隐含的特征或元件。</p>
        <span class="sep"></span>
        <div class="cell"></div>
        <span class="sep"></span>
        <div class="cell dots"><i></i><i class="lit"></i><i></i></div>
        <span class="sep"></span>
        <div class="flag"><svg width="12" height="16" viewBox="0 0 12 16"><path d="M1 0v16" stroke="#bbb" stroke-width="2"/><path d="M1 0l11 4-11 5z" fill="#aaa"/></svg></div>
        <span class="sep"></span>
        <button class="action" aria-label="查找"><svg class="s16"><use href="#i-binoc"/></svg></button>
        <span class="sep"></span>
        <button class="action" aria-label="选择"><svg width="18" height="18"><use href="#i-boxsel"/></svg></button>
        <div class="select-box">
          <select aria-label="选择过滤器"><option>智能</option></select>
          <i class="caret"></i>
        </div>
      </footer>
    </div>
  </body>
</html>
```

FILE: styles.css
```css
* {
  box-sizing: border-box;
}
body {
  margin: 0;
  height: 100vh;
  overflow: hidden;
  font-family: "Noto Sans", "Noto Sans CJK SC", sans-serif;
  font-size: 12px;
  color: #333;
}
button {
  display: flex;
  align-items: center;
  padding: 0;
  border: 0;
  background: none;
  font: inherit;
  color: inherit;
}
h1, h2, p, ul {
  margin: 0;
  padding: 0;
}
svg {
  display: block;
  flex: none;
}
.sprite {
  position: absolute;
}
.s12 {
  width: 12px;
  height: 10px;
}
.s16 {
  width: 16px;
  height: 16px;
}
.s32 {
  width: 32px;
  height: 32px;
}
.letters text {
  font: bold 7px "Liberation Sans", sans-serif;
  fill: #333;
}
.info text {
  font: bold 12px "Liberation Serif", serif;
  fill: #fff;
  text-anchor: middle;
}
.flip {
  transform: scaleX(-1);
}
.caret {
  display: inline-block;
  flex: none;
  border: 4px solid transparent;
  border-top-color: #888;
  border-bottom: 0;
}
.caret.up {
  border-top: 0;
  border-bottom: 4px solid #888;
}
.sep {
  flex: none;
  width: 1px;
  background: #c5c9cd;
}

.window {
  display: flex;
  flex-direction: column;
  height: 100%;
  border: 1px solid #555;
  outline: 3px solid #959595;
  outline-offset: -4px;
  padding: 3px;
  background: #fcfcfc;
}

/* title bar */
.titlebar {
  display: grid;
  grid-template-columns: 1fr auto 1fr;
  align-items: center;
  height: 32px;
  padding: 0 10px 0 12px;
}
.titlebar h1 {
  padding-bottom: 2px;
  font: bold 14px "Liberation Sans", "Noto Sans CJK SC", sans-serif;
  color: #222;
}
.qat {
  display: flex;
  align-items: center;
  gap: 8px;
}
.qat button {
  gap: 6px;
}
.qat .sep {
  height: 24px;
  margin: 0 -3px;
}
.close-win {
  margin: 0 2px;
}
.caret.custom {
  margin-left: 3px;
  border-width: 5px 5px 0;
  border-top-color: #333;
}
.win-controls {
  display: flex;
  justify-content: flex-end;
  gap: 15px;
}

/* ribbon tabs */
.tabrow {
  display: flex;
  align-items: flex-end;
  height: 29px;
  padding: 0 4px;
  font-size: 15px;
  line-height: 15px;
  color: #808080;
}
.tabrow .file-tab {
  height: 19px;
  width: 55px;
  justify-content: center;
  gap: 4px;
  padding-bottom: 2px;
  border: 1px solid #c5c9cd;
  border-bottom: 0;
  background: #edeff2;
  font-weight: bold;
}
.file-tab .caret {
  border-width: 4px 3px 0;
}
.tabs {
  display: flex;
  align-items: flex-end;
  margin-left: 8px;
}
.tabs button {
  height: 19px;
  padding: 0 11px 2px;
  border-top: 1px solid #c5c9cd;
  border-right: 1px solid #d5d9dd;
  background: #edeff2;
  font-weight: bold;
}
.tabs .active {
  height: 24px;
  margin-bottom: -1px;
  padding: 0 10px 2px;
  border: 1px solid #c5c9cd;
  border-bottom: 0;
  border-radius: 3px 3px 0 0;
  background: #fcfcfc;
  color: #222;
  z-index: 1;
}
.help-tools {
  display: flex;
  align-items: center;
  align-self: center;
  gap: 8px;
  margin-left: auto;
  padding: 0 4px 4px 0;
}
.help-tools button {
  gap: 6px;
}

/* ribbon */
.ribbon {
  display: flex;
  flex: none;
  height: 101px;
  margin: 0 4px;
  border: 1px solid #c5c9cd;
}
.group {
  display: flex;
  flex: none;
  flex-direction: column;
  border-right: 1px solid #d0d3d7;
}
.g-ops { width: 129px; }
.g-data { width: 107px; }
.g-comp { width: 150px; }
.g-datum { width: 151px; }
.g-cut { width: 82px; }
.g-mod { width: 58px; }
.g-view { width: 267px; }
.g-intent { width: 203px; }
.g-inv { width: 91px; }
.group.rest {
  flex: 1;
  border-right: 0;
}
.tools {
  display: flex;
  flex: 1;
  padding: 2px 0 0 2px;
  line-height: 12px;
}
.tools.centered {
  justify-content: center;
  padding-left: 0;
}
.big {
  flex: none;
  flex-direction: column;
  width: 42px;
  padding-top: 4px;
  white-space: nowrap;
}
.big.wide {
  width: 56px;
}
.g-datum .big,
.g-intent .big {
  width: 40px;
}
.big span {
  margin-top: 11px;
}
.big > .caret {
  margin-top: 4px;
}
.stack {
  padding-top: 2px;
}
.stack button {
  gap: 4px;
  height: 24px;
  padding: 0 4px;
  white-space: nowrap;
}
.stack .caret {
  margin-left: 3px;
}
.stack button:disabled {
  color: #999;
}
.stack button:disabled .caret {
  border-top-color: #aaa;
}
.divider {
  width: 1px;
  height: 56px;
  margin: 6px 4px;
  background: #ddd;
}
.caption {
  justify-content: center;
  gap: 4px;
  height: 22px;
  padding-bottom: 2px;
  border-top: 1px solid #c5c9cd;
  background: #edeff2;
  white-space: nowrap;
}

/* navigator */
.work {
  display: flex;
  flex: 1;
  min-height: 0;
}
.side {
  display: flex;
  flex-direction: column;
  flex: none;
  width: 305px;
  padding: 13px 1px 12px 4px;
}
.side-tabs {
  display: flex;
  flex: none;
  height: 29px;
}
.side-tabs button {
  width: 30px;
  justify-content: center;
  border: 1px solid #c5c9cd;
  border-left-width: 0;
  border-bottom: 0;
  background: #edeff2;
}
.side-tabs .active {
  border-left-width: 1px;
  margin-bottom: -1px;
  background: #fcfcfc;
  z-index: 1;
}
.side-panel {
  display: flex;
  flex: 1;
  flex-direction: column;
  min-height: 0;
  border: 1px solid #c5c9cd;
  border-right-width: 3px;
  border-bottom-width: 2px;
}
.side-head {
  display: flex;
  flex: none;
  align-items: center;
  height: 28px;
  padding: 0 4px 0 20px;
  gap: 12px;
}
.side-head h2 {
  flex: 1;
  padding-bottom: 2px;
  font-size: 13px;
  color: #444;
}
.side-head button {
  gap: 9px;
}
.side-search {
  display: flex;
  flex: none;
  align-items: center;
  gap: 10px;
  height: 29px;
  padding: 0 7px 6px 4px;
  border-bottom: 1px solid #c5c9cd;
}
.search-box {
  display: flex;
  flex: 1;
  min-width: 0;
  height: 21px;
  padding-right: 5px;
  border: 1px solid #c5c9cd;
  background: #fff;
}
.search-box input {
  flex: 1;
  min-width: 0;
  border: 0;
  outline: 0;
  background: none;
}
.side-search .caret {
  margin: 0 0 0 -4px;
}
.tree-area {
  display: flex;
  flex: 1;
  min-height: 0;
  padding: 6px 1px 1px 0;
}
.tree {
  flex: 1;
  overflow: hidden;
  margin-top: -1px;
  list-style: none;
  color: #444;
}
.tree li {
  display: flex;
  align-items: center;
  gap: 5px;
  height: 24px;
  padding-left: 16px;
  white-space: nowrap;
}
.tree .root {
  padding-left: 10px;
}
.tree .leaf {
  padding-left: 30px;
}
.tree .muted {
  color: #bbb;
}
.exp {
  border: 4px solid transparent;
  border-left: 7px solid #888;
  border-right: 0;
  margin-right: 2px;
}
.badge {
  width: 8px;
  height: 10px;
  margin: 0 -4px 6px 0;
}
.badge.single {
  width: 6px;
}
.scrollbar {
  display: flex;
  flex-direction: column;
  width: 18px;
  border: 1px solid #c5c9cd;
  background: #edeff2;
}
.scrollbar button {
  justify-content: center;
  height: 16px;
  background: linear-gradient(#fff, #e4e6e9);
}
.track {
  flex: 1;
  border: solid #c5c9cd;
  border-width: 1px 0;
}
.thumb {
  display: flex;
  flex-direction: column;
  align-items: center;
  justify-content: center;
  gap: 2px;
  height: 53%;
  border: 1px solid #c5c9cd;
  border-top: 0;
  background: linear-gradient(90deg, #fff, #e0e2e4);
}
.thumb i {
  width: 7px;
  height: 1px;
  background: #aaa;
}

/* graphics area */
.canvas {
  position: relative;
  flex: 1;
  margin-right: 4px;
  background: #404040;
}
.stage {
  display: grid;
  place-items: center;
  height: 100%;
  padding-top: 20px;
}
.view-bar {
  position: absolute;
  top: 7px;
  left: 50%;
  display: flex;
  height: 28px;
  padding: 0 4px;
  border: 1px solid #c5c9cd;
  background: #edeff2;
  transform: translateX(-50%);
}
.view-bar button {
  justify-content: center;
  width: 27px;
  border-right: 1px solid #c5c9cd;
  background: #fff;
}
.view-bar .more {
  width: 28px;
  background: linear-gradient(135deg, transparent 50%, #555 50%) 23px 19px / 4px 4px no-repeat #fff;
}
.mode {
  position: absolute;
  left: 10px;
  bottom: 161px;
  color: #999;
}
.tolerance {
  position: absolute;
  right: 54px;
  bottom: 6px;
  text-align: center;
  font: 13px/14px "Liberation Sans", sans-serif;
  color: #999;
}

/* status bar */
.status {
  display: flex;
  flex: none;
  align-items: center;
  height: 38px;
  padding: 0 18px 0 6px;
  border-top: 2px solid #959595;
  background: #edeff2;
}
.toggle {
  justify-content: center;
  width: 22px;
  height: 22px;
  margin: 6px 4px 0 0;
  border: 1px solid #c5c9cd;
  background: #f8f9fa;
}
.toggle.on {
  background: #dcdee1;
  border-top-color: #888;
}
.status .sep {
  height: 30px;
}
.status .toggle + .sep {
  height: 22px;
  margin: 6px 0 0 5px;
}
.status .message {
  flex: 1;
  padding: 0 0 8px 7px;
  font-size: 11px;
}
.message::before {
  content: "";
  display: inline-block;
  width: 5px;
  height: 5px;
  margin: 0 5px 2px 0;
  border-radius: 50%;
  background: #15628a;
}
.cell {
  width: 35px;
}
.dots {
  display: flex;
  align-items: center;
  justify-content: center;
  gap: 2px;
}
.dots i {
  width: 6px;
  height: 6px;
  border-radius: 50%;
  background: #ccc;
}
.dots .lit {
  width: 10px;
  height: 10px;
  background: #ff0;
}
.flag {
  width: 40px;
  padding-left: 5px;
}
.action {
  justify-content: center;
  width: 40px;
  height: 28px;
  margin: 0 3px;
  border: 1px solid #b5b8bc;
  border-radius: 2px;
  background: linear-gradient(#fff, #e6e8ea);
}
.select-box {
  position: relative;
  width: 176px;
  margin-left: 94px;
}
.select-box select {
  display: block;
  width: 100%;
  height: 19px;
  padding: 0 6px;
  border: 1px solid #c5c9cd;
  border-radius: 0;
  appearance: none;
  background: linear-gradient(#c5c9cd, #c5c9cd) 159px 0 / 1px 100% no-repeat, linear-gradient(#fff, #f2f3f4);
  font: inherit;
  color: #333;
}
.select-box .caret {
  position: absolute;
  right: 4px;
  top: 8px;
}
```
